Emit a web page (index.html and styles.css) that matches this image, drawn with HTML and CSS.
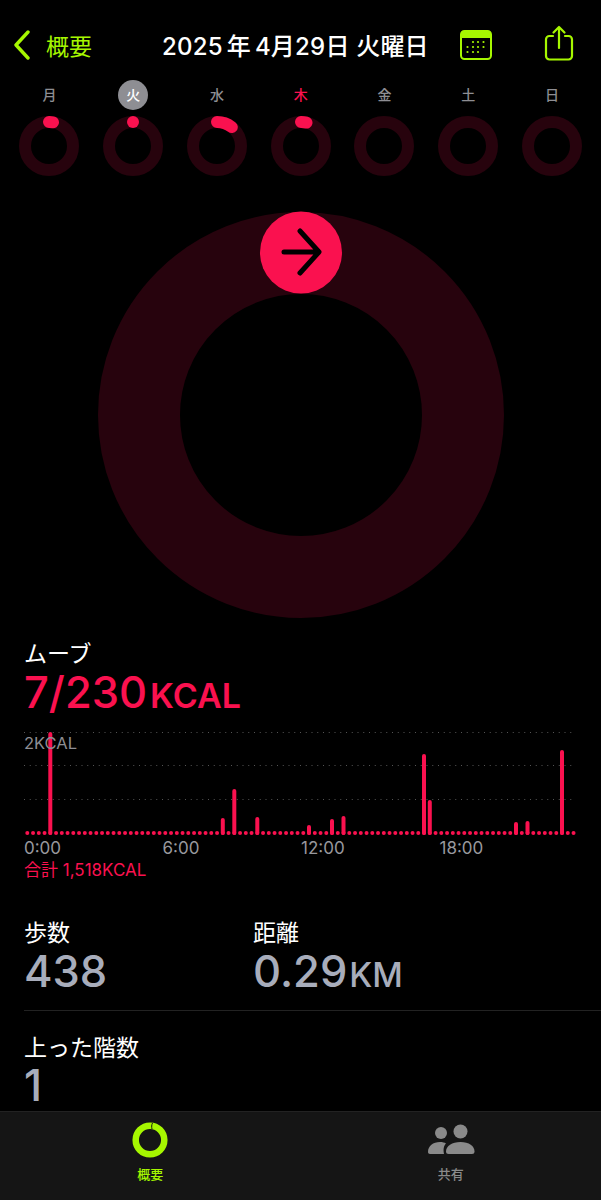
FILE: index.html
```html
<!DOCTYPE html>
<html lang="ja">
<head>
    <meta charset="UTF-8">
    <meta name="viewport" content="width=device-width, initial-scale=1.0">
    <title>概要</title>
    <link rel="stylesheet" href="styles.css">
</head>
<body>

    <header class="topbar">
        <a class="back">
            <svg class="back-icon" width="18" height="30" viewBox="0 0 18 30">
                <path d="M15 2 L3 15 L15 28" />
            </svg>
            <span>概要</span>
        </a>
        <h1 class="date">2025<span class="thin-gap">年</span>4月29日 火曜日</h1>
        <div class="actions">
            <svg class="icon-calendar" width="33" height="30" viewBox="0 0 33 30">
                <rect class="cal-frame" x="1" y="1" width="30" height="28" rx="3.5" />
                <path class="cal-top" d="M1 4.5 a3.5 3.5 0 0 1 3.5 -3.5 h23 a3.5 3.5 0 0 1 3.5 3.5 V8 H1 Z" />
                <g class="cal-dots">
                    <circle cx="13" cy="12" r="1.1" /><circle cx="18" cy="12" r="1.1" /><circle cx="23.500" cy="12" r="1.1" />
                    <circle cx="7.500" cy="17" r="1.1" /><circle cx="13" cy="17" r="1.1" /><circle cx="18" cy="17" r="1.1" /><circle cx="23.500" cy="17" r="1.1" />
                    <circle cx="7.500" cy="22" r="1.1" /><circle cx="13" cy="22" r="1.1" /><circle cx="18" cy="22" r="1.1" />
                </g>
            </svg>
            <svg class="icon-share" width="30" height="36" viewBox="0 0 30 36">
                <path d="M9 11 H5.500 a3.500 3.500 0 0 0 -3.500 3.500 V31 a3.500 3.500 0 0 0 3.500 3.500 H24.500 a3.500 3.500 0 0 0 3.500 -3.500 V14.500 a3.500 3.500 0 0 0 -3.500 -3.500 H21" />
                <path d="M15 23 V2 M9.500 7.500 L15 2 L20.500 7.500" />
            </svg>
        </div>
    </header>

    <section class="week">
        <div class="day">
            <span class="day-name">月</span>
            <svg class="mini-ring" width="60" height="60" viewBox="0 0 60 60">
                <circle class="ring-track" cx="30" cy="30" r="24" />
                <path class="ring-fill" d="M30 6 A24 24 0 0 1 34 6.300" />
            </svg>
        </div>
        <div class="day">
            <span class="day-name today">火</span>
            <svg class="mini-ring" width="60" height="60" viewBox="0 0 60 60">
                <circle class="ring-track" cx="30" cy="30" r="24" />
                <path class="ring-fill" d="M30 6 L30 6" />
            </svg>
        </div>
        <div class="day">
            <span class="day-name">水</span>
            <svg class="mini-ring" width="60" height="60" viewBox="0 0 60 60">
                <circle class="ring-track" cx="30" cy="30" r="24" />
                <path class="ring-fill" d="M30 6 A24 24 0 0 1 44.800 11.100" />
            </svg>
        </div>
        <div class="day">
            <span class="day-name current">木</span>
            <svg class="mini-ring" width="60" height="60" viewBox="0 0 60 60">
                <circle class="ring-track" cx="30" cy="30" r="24" />
                <path class="ring-fill" d="M30 6 A24 24 0 0 1 35.500 6.600" />
            </svg>
        </div>
        <div class="day">
            <span class="day-name">金</span>
            <svg class="mini-ring" width="60" height="60" viewBox="0 0 60 60">
                <circle class="ring-track" cx="30" cy="30" r="24" />
            </svg>
        </div>
        <div class="day">
            <span class="day-name">土</span>
            <svg class="mini-ring" width="60" height="60" viewBox="0 0 60 60">
                <circle class="ring-track" cx="30" cy="30" r="24" />
            </svg>
        </div>
        <div class="day">
            <span class="day-name">日</span>
            <svg class="mini-ring" width="60" height="60" viewBox="0 0 60 60">
                <circle class="ring-track" cx="30" cy="30" r="24" />
            </svg>
        </div>
    </section>

    <section class="big-ring-wrap">
        <svg width="408" height="408" viewBox="0 0 408 408">
            <circle class="big-track" cx="204" cy="204" r="162" />
            <circle class="big-head" cx="204" cy="41.500" r="41" />
            <path class="big-arrow" d="M187 41 H220 M203 20 L222 41 L203 62" />
        </svg>
    </section>

    <section class="move">
        <h2 class="stat-label">ムーブ</h2>
        <p class="move-value">7/230<span class="move-unit">KCAL</span></p>

        <div class="chart">
            <svg class="chart-svg" width="601" height="106" viewBox="0 0 601 106">
                <g class="grid-lines">
                    <path d="M24 1.500 H574" />
                    <path d="M24 34.500 H574" />
                    <path d="M24 68.500 H574" />
                </g>
                <path class="chart-dots" d="M27.300 102 H576" />
                <g class="chart-bars">
                    <path d="M50.300 3 V102" />
                    <path d="M222.800 89 V102" />
                    <path d="M234.300 60 V102" />
                    <path d="M257.300 88 V102" />
                    <path d="M309 96 V102" />
                    <path d="M332 90 V102" />
                    <path d="M343.500 87 V102" />
                    <path d="M424 25 V102" />
                    <path d="M429.800 71 V102" />
                    <path d="M516 93 V102" />
                    <path d="M527.500 92 V102" />
                    <path d="M562 21 V102" />
                </g>
            </svg>
            <span class="chart-max">2KCAL</span>
        </div>

        <div class="chart-hours">
            <span>0:00</span>
            <span>6:00</span>
            <span>12:00</span>
            <span>18:00</span>
        </div>
        <p class="chart-total">合計 1,518KCAL</p>
    </section>

    <section class="stats-row">
        <div class="stat stat-steps">
            <h2 class="stat-label">歩数</h2>
            <p class="stat-value">438</p>
        </div>
        <div class="stat">
            <h2 class="stat-label">距離</h2>
            <p class="stat-value">0.29<span class="stat-unit">KM</span></p>
        </div>
    </section>

    <section class="stats-row stats-floors">
        <div class="stat">
            <h2 class="stat-label">上った階数</h2>
            <p class="stat-value">1</p>
        </div>
    </section>

    <nav class="tabbar">
        <div class="tab active">
            <svg width="36" height="36" viewBox="0 0 36 36">
                <circle class="tab-ring" cx="18" cy="18" r="14.300" />
                <path class="tab-ring-notch" d="M20.500 1 C19.500 3 19.500 5 20 7" />
            </svg>
            <span>概要</span>
        </div>
        <div class="tab">
            <svg width="48" height="36" viewBox="0 0 48 36">
                <circle class="tab-people" cx="14" cy="11" r="6" />
                <circle class="tab-people" cx="33.500" cy="9.500" r="7" />
                <path class="tab-people" d="M1 30 C1 24 6 20 13 20 C15.500 20 17.500 20.500 19 21.500 C17 23.500 16 26.500 17 32 H3 C1.800 32 1 31.200 1 30 Z" />
                <path class="tab-people" d="M19 29.500 C19 24 25 20 33.500 20 C42 20 47.500 24 47.500 29.500 C47.500 31.200 46.500 32 45 32 H21.500 C20 32 19 31.200 19 29.500 Z" />
            </svg>
            <span>共有</span>
        </div>
    </nav>

</body>
</html>
```

FILE: styles.css
```css
body {
    font-family: Inter, "Noto Sans CJK JP", sans-serif;
    background-color: #000;
    color: #fff;
    margin: 0;
    padding: 0;
    width: 601px;
    height: 1200px;
    overflow: hidden;
    display: flex;
    flex-direction: column;
}

h1, h2, p {
    margin: 0;
    font-weight: 400;
}

svg {
    display: block;
}

/* top bar */
.topbar {
    height: 80px;
    padding-top: 9px;
    box-sizing: border-box;
    display: flex;
    align-items: center;
}

.back {
    display: flex;
    align-items: center;
    width: 162px;
    padding-left: 13px;
    box-sizing: border-box;
    color: #a6f700;
    font-size: 23px;
}

.back span {
    margin-left: 15px;
}

.back-icon path {
    fill: none;
    stroke: #a6f700;
    stroke-width: 3.4;
    stroke-linecap: round;
    stroke-linejoin: round;
}

.date {
    font-size: 24px;
    font-weight: 500;
    letter-spacing: 0.2px;
    white-space: nowrap;
    width: 298px;
}

.thin-gap {
    margin: 0 4px;
}

.actions {
    display: flex;
    align-items: center;
    gap: 51px;
}

.cal-frame {
    fill: none;
    stroke: #a6f700;
    stroke-width: 2;
}

.cal-top, .cal-dots {
    fill: #a6f700;
}

.icon-share {
    margin-top: -4px;
}

.icon-share path {
    fill: none;
    stroke: #a6f700;
    stroke-width: 2.2;
    stroke-linecap: round;
    stroke-linejoin: round;
}

/* week strip */
.week {
    display: grid;
    grid-template-columns: repeat(7, 83.75px);
    padding-left: 7.500px;
}

.day {
    display: flex;
    flex-direction: column;
    align-items: center;
    gap: 6px;
}

.day-name {
    width: 30px;
    height: 30px;
    line-height: 30px;
    text-align: center;
    border-radius: 50%;
    font-size: 14px;
    font-weight: 500;
    color: #8e8e93;
}

.day-name.today {
    background-color: #8e8e93;
    color: #fff;
}

.day-name.current {
    color: #fa114f;
}

.ring-track {
    fill: none;
    stroke: #27030d;
    stroke-width: 12;
}

.ring-fill {
    fill: none;
    stroke: #fa114f;
    stroke-width: 12;
    stroke-linecap: round;
}

/* big ring */
.big-ring-wrap {
    display: flex;
    justify-content: center;
    margin-top: 35px;
}

.big-track {
    fill: none;
    stroke: #27030d;
    stroke-width: 82;
}

.big-head {
    fill: #fa114f;
}

.big-arrow {
    fill: none;
    stroke: #000;
    stroke-width: 5;
    stroke-linecap: round;
    stroke-linejoin: round;
}

/* move section */
.move {
    margin-top: 22px;
}

.stat-label {
    font-size: 23px;
    line-height: 26px;
    color: #fff;
}

.move > .stat-label {
    padding-left: 24px;
}

.move-value {
    padding-left: 24px;
    font-size: 43.500px;
    font-weight: 500;
    line-height: 50px;
    color: #fa114f;
}

.move-unit {
    font-size: 34px;
    font-weight: 600;
    line-height: 0;
    margin-left: 3px;
}

.chart {
    position: relative;
    margin-top: 14px;
}

.grid-lines path {
    fill: none;
    stroke: #555;
    stroke-width: 1;
    stroke-dasharray: 1 4.750;
}

.chart-dots {
    fill: none;
    stroke: #fa114f;
    stroke-width: 4;
    stroke-linecap: round;
    stroke-dasharray: 0 5.750;
}

.chart-bars path {
    fill: none;
    stroke: #fa114f;
    stroke-width: 4;
    stroke-linecap: round;
}

.chart-max {
    position: absolute;
    left: 24px;
    top: 3px;
    font-size: 16.500px;
    line-height: 18px;
    color: #8e8e93;
}

.chart-hours {
    display: grid;
    grid-template-columns: repeat(4, 138.500px);
    padding-left: 24px;
    font-size: 17px;
    line-height: 22px;
    color: #98989d;
}

.chart-total {
    padding-left: 24px;
    font-size: 17px;
    line-height: 22px;
    color: #fa114f;
}

/* stats */
.stats-row {
    display: flex;
    margin-top: 39px;
    margin-left: 24px;
    padding-bottom: 15px;
    border-bottom: 1px solid #222;
}

.stat-steps {
    width: 229px;
}

.stat-value {
    font-size: 43.500px;
    font-weight: 450;
    line-height: 48px;
    margin-top: 1px;
    color: #a8adbb;
}

.stat-unit {
    font-size: 33.500px;
    font-weight: 500;
    line-height: 0;
    margin-left: 2px;
}

.stats-floors {
    margin-top: 24px;
    padding-bottom: 0;
    border-bottom: none;
}

.stats-floors .stat-value {
    margin-top: 0;
}

/* tab bar */
.tabbar {
    margin-top: auto;
    height: 89px;
    box-sizing: border-box;
    background-color: #151515;
    border-top: 1px solid #222;
    display: grid;
    grid-template-columns: 1fr 1fr;
}

.tab {
    display: flex;
    flex-direction: column;
    align-items: center;
    padding-top: 10px;
    gap: 7px;
    font-size: 13px;
    font-weight: 500;
    line-height: 18px;
    color: #8a8a8a;
}

.tab.active {
    color: #a6f700;
}

.tab-ring {
    fill: none;
    stroke: #a6f700;
    stroke-width: 6.500;
}

.tab-ring-notch {
    fill: none;
    stroke: #151515;
    stroke-width: 1;
}

.tab-people {
    fill: #8a8a8a;
}
```
